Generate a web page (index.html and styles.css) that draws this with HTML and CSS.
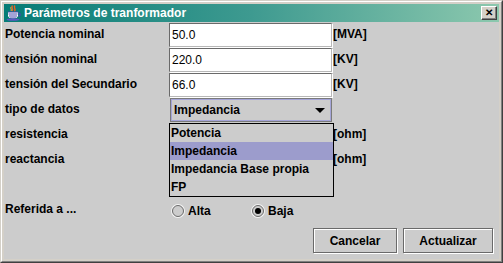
FILE: index.html
```html
<!DOCTYPE html>
<html lang="es">
<head>
<meta charset="UTF-8">
<title>Parámetros de tranformador</title>
<link rel="stylesheet" href="styles.css">
</head>
<body>
  <div class="window">
    <div class="frame">
      <div class="titlebar">
        <svg class="appicon" width="16" height="16" viewBox="0 0 16 16">
          <path d="M6.5 0.5 C4.5 2.5 8 3.5 6 6 M9 0.5 C7 2.5 10.5 4 8.5 6.5" stroke="#f06020" stroke-width="1.4" fill="none"/>
          <path d="M5 2 C4 3.5 6 4.5 5 6" stroke="#f8c040" stroke-width="0.8" fill="none"/>
          <path d="M2 7 H12 V10.5 C12 12.5 10 13.5 7 13.5 C4 13.5 2 12.5 2 10.5 Z" fill="#ffffff"/>
          <path d="M2 7 H12 M2.5 9 H11.5 M3 11 H11 M4 13 H10" stroke="#4848b0" stroke-width="1.1"/>
          <path d="M12 8 C15 8 15 11 12 11" stroke="#4848b0" stroke-width="1.2" fill="none"/>
          <ellipse cx="7" cy="14.6" rx="6.5" ry="1.1" fill="#5a5ac0"/>
        </svg>
        <span class="title">Parámetros de tranformador</span>
        <span class="closebtn">&#x2715;</span>
      </div>

      <div class="content">
        <div class="form">
          <label class="lbl">Potencia nominal</label>
          <div class="field">50.0</div>
          <span class="unit">[MVA]</span>

          <label class="lbl">tensión nominal</label>
          <div class="field">220.0</div>
          <span class="unit">[KV]</span>

          <label class="lbl">tensión del Secundario</label>
          <div class="field">66.0</div>
          <span class="unit">[KV]</span>

          <label class="lbl">tipo de datos</label>
          <div class="combo-cell">
            <div class="combo">
              <span>Impedancia</span>
              <span class="arrow"></span>
            </div>
            <ul class="popup">
              <li>Potencia</li>
              <li class="selected">Impedancia</li>
              <li>Impedancia Base propia</li>
              <li>FP</li>
            </ul>
          </div>
          <span class="unit"></span>

          <label class="lbl">resistencia</label>
          <div class="field"></div>
          <span class="unit">[ohm]</span>

          <label class="lbl">reactancia</label>
          <div class="field"></div>
          <span class="unit">[ohm]</span>

          <span class="lbl"></span>
          <span></span>
          <span></span>

          <label class="lbl">Referida a ...</label>
          <div class="radios">
            <span class="radio"><span class="dot"></span>Alta</span>
            <span class="radio"><span class="dot on"></span>Baja</span>
          </div>
          <span></span>
        </div>

        <div class="buttons">
          <button class="btn btn-cancel">Cancelar</button>
          <button class="btn btn-update">Actualizar</button>
        </div>
      </div>
    </div>
  </div>
</body>
</html>
```

FILE: styles.css
```css
body {
    margin: 0;
    background: #d4d0c8;
    font-family: "Liberation Sans", Arial, sans-serif;
    font-size: 12px;
}

.window {
    width: 503px;
    height: 263px;
    box-sizing: border-box;
    border: 1px solid;
    border-color: #d4d0c8 #404040 #404040 #d4d0c8;
}

.frame {
    height: 100%;
    box-sizing: border-box;
    border: 1px solid;
    border-color: #ffffff #808080 #808080 #ffffff;
    padding: 2px;
    background: #d4d0c8;
    display: flex;
    flex-direction: column;
}

.titlebar {
    height: 18px;
    display: flex;
    align-items: center;
    background: linear-gradient(to right, #067c76, #3e9a90 50%, #8cc8ae);
    color: #ffffff;
    font-weight: bold;
    font-size: 12px;
}

.appicon {
    margin-left: 2px;
    margin-right: 2px;
}

.title {
    flex: 1;
}

.closebtn {
    width: 16px;
    height: 14px;
    box-sizing: border-box;
    margin-right: 2px;
    background: #d4d0c8;
    border: 1px solid;
    border-color: #ffffff #404040 #404040 #ffffff;
    box-shadow: inset -1px -1px #808080;
    color: #000;
    font-size: 10px;
    font-weight: bold;
    line-height: 12px;
    text-align: center;
}

.content {
    flex: 1;
    background: #cccccc;
    padding-top: 1px;
    display: flex;
    flex-direction: column;
}

.form {
    display: grid;
    grid-template-columns: 165px 163px 1fr;
    grid-auto-rows: 25px;
}

.lbl {
    font-weight: bold;
    color: #000;
    padding-left: 1px;
    line-height: 25px;
    height: 25px;
    margin-top: -1px;
}

.unit {
    font-weight: bold;
    color: #000;
    line-height: 25px;
    margin-top: -1px;
    padding-left: 1px;
}

.field {
    height: 24px;
    box-sizing: border-box;
    background: #ffffff;
    border: 1px solid #6a6a6a;
    border-right-color: #b8b8b8;
    border-bottom-color: #b8b8b8;
    box-shadow: 1px 1px 0 #ffffff;
    padding-left: 2px;
    line-height: 22px;
    color: #000;
}

.combo-cell {
    position: relative;
}

.combo {
    margin-left: 1px;
    height: 24px;
    box-sizing: border-box;
    border: 1px solid #7a7a7a;
    box-shadow: inset 0 0 0 1px #a4a4d8;
    background: #cccccc;
    display: flex;
    align-items: center;
    justify-content: space-between;
    padding: 0 6px 0 3px;
    font-weight: bold;
}

.arrow {
    width: 0;
    height: 0;
    border-left: 5px solid transparent;
    border-right: 5px solid transparent;
    border-top: 5px solid #000;
}

.popup {
    position: absolute;
    left: 0;
    top: 25px;
    width: 165px;
    margin: 0;
    padding: 0;
    list-style: none;
    background: #cccccc;
    border: 1px solid #000;
    box-sizing: border-box;
    z-index: 2;
}

.popup li {
    height: 18px;
    line-height: 18px;
    padding-left: 1px;
    font-weight: bold;
}

.popup li.selected {
    background: #9c9ccc;
}

.radios {
    display: flex;
    align-items: center;
    padding-left: 3px;
}

.radio {
    width: 83px;
    display: flex;
    align-items: center;
    font-weight: bold;
}

.dot {
    width: 12px;
    height: 12px;
    box-sizing: border-box;
    border-radius: 50%;
    border: 1px solid #6a6a6a;
    box-shadow: 0 0 0 1px #f4f4f4;
    background: #cccccc;
    margin-right: 4px;
    position: relative;
}

.dot.on::after {
    content: "";
    position: absolute;
    left: 2px;
    top: 2px;
    width: 6px;
    height: 6px;
    border-radius: 50%;
    background: #000;
}

.buttons {
    display: flex;
    justify-content: flex-end;
    gap: 6px;
    padding-top: 5px;
    padding-right: 6px;
}

.btn {
    height: 25px;
    box-sizing: border-box;
    background: #cccccc;
    border: 1px solid #6a6a6a;
    box-shadow: inset 1px 1px 0 #ffffff, 1px 1px 0 #ffffff;
    font-family: "Liberation Sans", Arial, sans-serif;
    font-size: 12px;
    font-weight: bold;
    color: #000;
    padding: 0;
}

.btn-cancel {
    width: 84px;
}

.btn-update {
    width: 90px;
}
```
